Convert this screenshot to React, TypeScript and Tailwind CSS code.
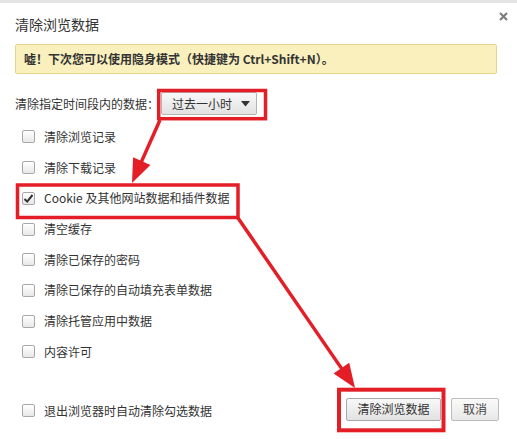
import React from 'react';

const font = { fontFamily: '"Noto Sans CJK SC", "Noto Sans", sans-serif' };

const items = [
  { label: '清除浏览记录', checked: false },
  { label: '清除下载记录', checked: false },
  { label: 'Cookie 及其他网站数据和插件数据', checked: true },
  { label: '清空缓存', checked: false },
  { label: '清除已保存的密码', checked: false },
  { label: '清除已保存的自动填充表单数据', checked: false },
  { label: '清除托管应用中数据', checked: false },
  { label: '内容许可', checked: false },
];

const Checkbox: React.FC<{ checked?: boolean }> = ({ checked }) => (
  <span className="w-[13px] h-[13px] shrink-0 rounded-[2px] border border-[#a8a8a8] bg-gradient-to-b from-[#ffffff] to-[#e8e8e8] flex items-center justify-center">
    {checked && (
      <svg width="11" height="11" viewBox="0 0 11 11">
        <path d="M1.5 6 L4.2 8.6 L9.5 2" fill="none" stroke="#333" strokeWidth="2" />
      </svg>
    )}
  </span>
);

// arrow from (x1,y1) to tip (x2,y2)
const Arrow: React.FC<{ x1: number; y1: number; x2: number; y2: number }> = ({ x1, y1, x2, y2 }) => {
  const dx = x2 - x1;
  const dy = y2 - y1;
  const len = Math.hypot(dx, dy);
  const ux = dx / len;
  const uy = dy / len;
  const L = 24;
  const W = 19;
  const bx = x2 - ux * L;
  const by = y2 - uy * L;
  const px = -uy;
  const py = ux;
  const pts = `${x2},${y2} ${bx + (px * W) / 2},${by + (py * W) / 2} ${bx - (px * W) / 2},${by - (py * W) / 2}`;
  return (
    <g>
      <line x1={x1} y1={y1} x2={bx + ux * 2} y2={by + uy * 2} stroke="#e31e26" strokeWidth="3.5" />
      <polygon points={pts} fill="#e31e26" />
    </g>
  );
};

const App: React.FC = () => {
  return (
    <div
      className="relative w-[517px] h-[439px] bg-white border-t-[3px] border-[#e4e4e4] overflow-hidden text-[#333]"
      style={font}
    >
      <div className="flex flex-col px-[15px]">
        <div className="mt-[11px] h-[20px] leading-[20px] text-[14px] text-[#333]">清除浏览数据</div>

        <div className="mt-[10px] h-[30px] w-[482px] flex items-center px-[8px] rounded-[2px] bg-[#f9f0bd] border border-[#e5d68c] text-[12px] font-bold text-[#333]">
          嘘！下次您可以使用隐身模式（快捷键为 Ctrl+Shift+N）。
        </div>

        <div className="mt-[18px] h-[23px] flex items-center text-[12px]">
          <span>清除指定时间段内的数据：</span>
          <button className="ml-[2px] h-[23px] w-[96px] flex items-center justify-between pl-[10px] pr-[6px] rounded-[2px] border border-[#b4b4b4] bg-gradient-to-b from-[#f8f8f8] to-[#e2e2e2] text-[12px] text-[#333]">
            <span>过去一小时</span>
            <svg width="9" height="6" viewBox="0 0 9 6">
              <path d="M0 0 H9 L4.5 5.5 Z" fill="#333" />
            </svg>
          </button>
        </div>

        <div className="mt-[6.6px] flex flex-col">
          {items.map((it) => (
            <label key={it.label} className="h-[30.7px] flex items-center pl-[7px] gap-[9px] text-[12px]">
              <Checkbox checked={it.checked} />
              <span>{it.label}</span>
            </label>
          ))}
        </div>

        <div className="mt-[30.6px] h-[23px] flex items-center justify-between">
          <label className="flex items-center pl-[7px] gap-[9px] text-[12px] mt-[3px]">
            <Checkbox />
            <span>退出浏览器时自动清除勾选数据</span>
          </label>
          <div className="flex items-center gap-[10px] pr-[3px]">
            <button className="h-[23px] w-[95px] rounded-[2px] border border-[#a8a8a8] bg-gradient-to-b from-[#f8f8f8] to-[#e2e2e2] text-[12px] text-[#333]">
              清除浏览数据
            </button>
            <button className="h-[23px] w-[48px] rounded-[2px] border border-[#bdbdbd] bg-gradient-to-b from-[#fafafa] to-[#e8e8e8] text-[12px] text-[#444]">
              取消
            </button>
          </div>
        </div>
      </div>

      <button className="absolute top-[8px] right-[9px] w-[10px] h-[10px] flex items-center justify-center">
        <svg width="9" height="9" viewBox="0 0 9 9">
          <path d="M1 1 L8 8 M8 1 L1 8" stroke="#7a7a7a" strokeWidth="2" />
        </svg>
      </button>

      <svg className="absolute left-0 top-[-3px] pointer-events-none" width="517" height="439">
        <rect x="158.7" y="90.5" width="106.8" height="28.2" fill="none" stroke="#e31e26" strokeWidth="3.5" />
        <rect x="17.5" y="185" width="220.5" height="32.5" fill="none" stroke="#e31e26" strokeWidth="3.5" />
        <rect x="339" y="389.7" width="104.5" height="40.6" fill="none" stroke="#e31e26" strokeWidth="4" />
        <Arrow x1={160} y1={120} x2={132} y2={183} />
        <Arrow x1={238} y1={218} x2={355} y2={388} />
      </svg>
    </div>
  );
};

export default App;
